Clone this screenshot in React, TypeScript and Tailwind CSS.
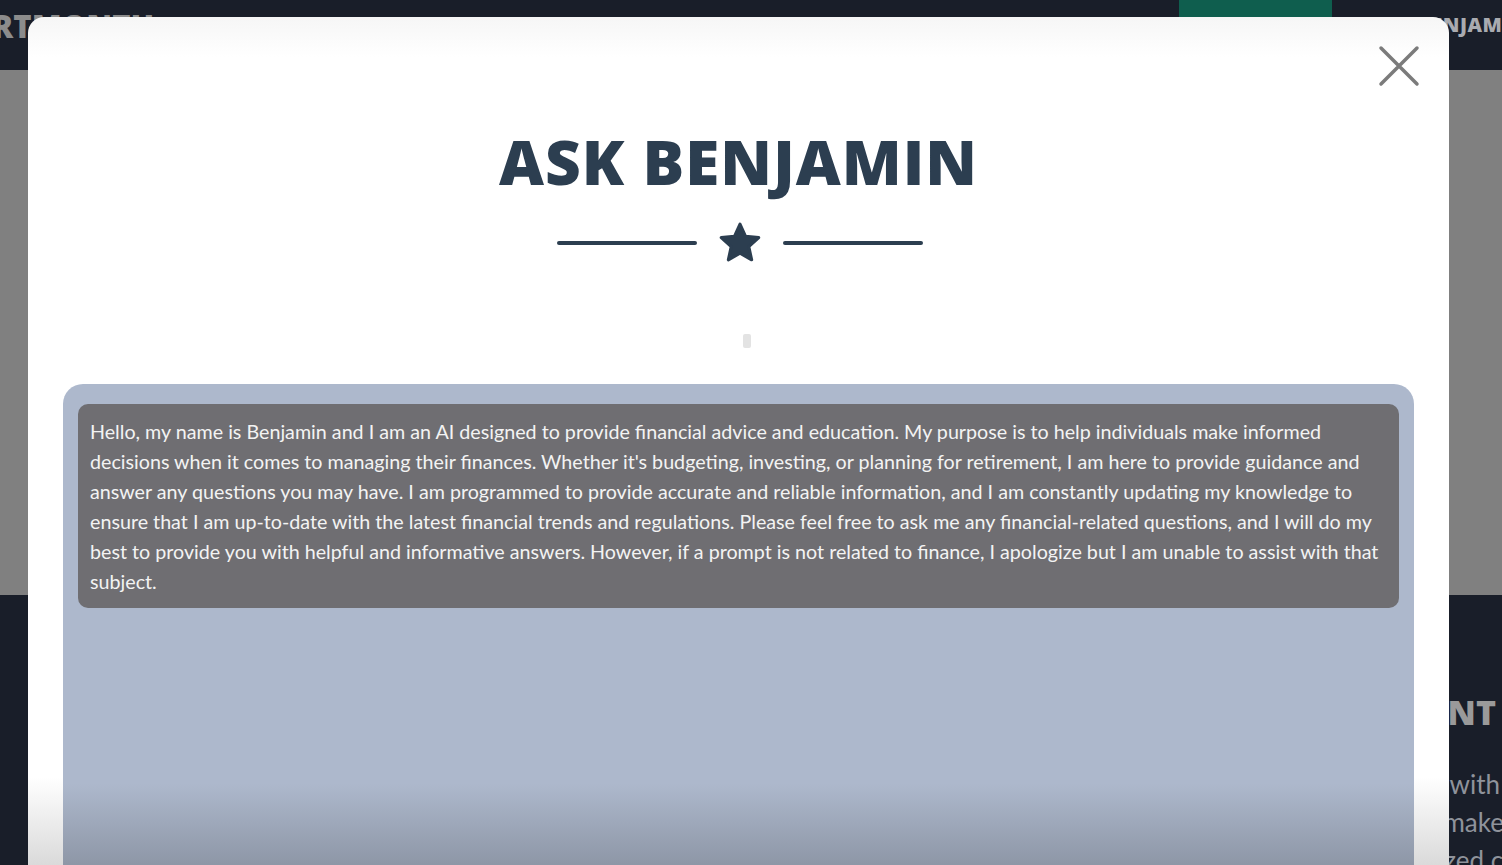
import React from 'react';

const WELCOME =
  "Hello, my name is Benjamin and I am an AI designed to provide financial advice and education. My purpose is to help individuals make informed decisions when it comes to managing their finances. Whether it's budgeting, investing, or planning for retirement, I am here to provide guidance and answer any questions you may have. I am programmed to provide accurate and reliable information, and I am constantly updating my knowledge to ensure that I am up-to-date with the latest financial trends and regulations. Please feel free to ask me any financial-related questions, and I will do my best to provide you with helpful and informative answers. However, if a prompt is not related to finance, I apologize but I am unable to assist with that subject.";

function CloseIcon() {
  return (
    <svg width="42" height="42" viewBox="0 0 42 42" fill="none">
      <path d="M3 3 L39 39 M39 3 L3 39" stroke="#7b7b7b" strokeWidth="3.5" strokeLinecap="round" />
    </svg>
  );
}

function StarIcon() {
  return (
    <svg width="46" height="44" viewBox="0 0 24 23" fill="#2c3e50">
      <path
        d="M12 1.6 L14.9 8 L21.8 8.7 L16.6 13.4 L18.1 20.3 L12 16.8 L5.9 20.3 L7.4 13.4 L2.2 8.7 L9.1 8 Z"
        stroke="#2c3e50"
        strokeWidth="1.6"
        strokeLinejoin="round"
      />
    </svg>
  );
}

function BackgroundPage() {
  return (
    <div className="flex flex-col h-[865px] w-full overflow-hidden" style={{ fontFamily: 'Lato, sans-serif' }}>
      {/* top nav */}
      <header className="flex h-[70px] shrink-0 bg-[#191e29]">
        <div className="-ml-[78px] pt-[11px] text-[31px] font-[800] text-[#8c8c8c] whitespace-nowrap leading-none" style={{ fontFamily: '"Open Sans", sans-serif' }}>
          SMARTMONTH
        </div>
        <div className="ml-auto flex h-full">
          <div className="w-[153px] h-full bg-[#0f5e4e]" />
          <div className="ml-[38px] -mr-[25px] pt-[15px] text-[20px] font-[800] text-[#a9abb0] whitespace-nowrap leading-none tracking-[0.5px]" style={{ fontFamily: '"Open Sans", sans-serif' }}>
            ASK BENJAMIN
          </div>
        </div>
      </header>
      {/* dimmed hero */}
      <div className="h-[525px] shrink-0 bg-[#808080]" />
      {/* dark section */}
      <section className="flex-1 bg-[#191e29] flex justify-end">
        <div className="w-[520px] pt-[100px] text-right">
          <h2 className="text-[34px] font-[800] text-[#9a9a9a] leading-none pr-[6px]" style={{ fontFamily: '"Open Sans", sans-serif' }}>
            WEALTH MANAGEMENT
          </h2>
          <div className="mt-[36px] text-[26px] leading-[38px] text-[#8f939b] whitespace-nowrap">
            <div className="pr-[2px]">We help you plan your finances with</div>
            <div className="-mr-[2px]">confidence so that you can make</div>
            <div className="-mr-[80px]">smart, personalized choices.</div>
          </div>
        </div>
      </section>
    </div>
  );
}

export default function App() {
  return (
    <div className="relative w-full h-[865px] overflow-hidden bg-[#191e29]">
      <BackgroundPage />

      {/* modal */}
      <div className="absolute left-[28px] top-[17px] w-[1421px] h-[848px] overflow-hidden rounded-t-[16px] bg-[linear-gradient(to_bottom,#f6f6f6_0px,#ffffff_40px,#ffffff_760px,#dadada_848px)]">
        <div className="flex justify-end pt-[28px] pr-[29px]">
          <button aria-label="Close">
            <CloseIcon />
          </button>
        </div>

        <h1
          className="mt-[43px] text-center text-[62px] font-[800] leading-none text-[#2c3e50] tracking-[1px]"
          style={{ fontFamily: '"Open Sans", sans-serif' }}
        >
          ASK BENJAMIN
        </h1>

        <div className="mt-[29px] flex items-center justify-center gap-[20px] pl-[3px]">
          <div className="w-[140px] h-[4px] rounded-full bg-[#2c3e50]" />
          <StarIcon />
          <div className="w-[140px] h-[4px] rounded-full bg-[#2c3e50]" />
        </div>

        <div className="mt-[69px] flex justify-center pl-[17px]">
          <div className="w-[8px] h-[14px] rounded-[2px] bg-[#e3e3e3]" />
        </div>

        <div className="mx-[35px] mt-[36px] h-[520px] rounded-[20px] px-[15px] pt-[20px] bg-[linear-gradient(to_bottom,#adb8cc_0px,#adb8cc_400px,#8e97a7_480px)]">
          <div
            className="rounded-[10px] bg-[#6f6e72] px-[12px] pt-[13px] pb-[11px] text-[19.7px] leading-[30px] text-[#f3f3f3]"
            style={{ fontFamily: 'Lato, sans-serif' }}
          >
            {WELCOME}
          </div>
        </div>
      </div>
    </div>
  );
}
